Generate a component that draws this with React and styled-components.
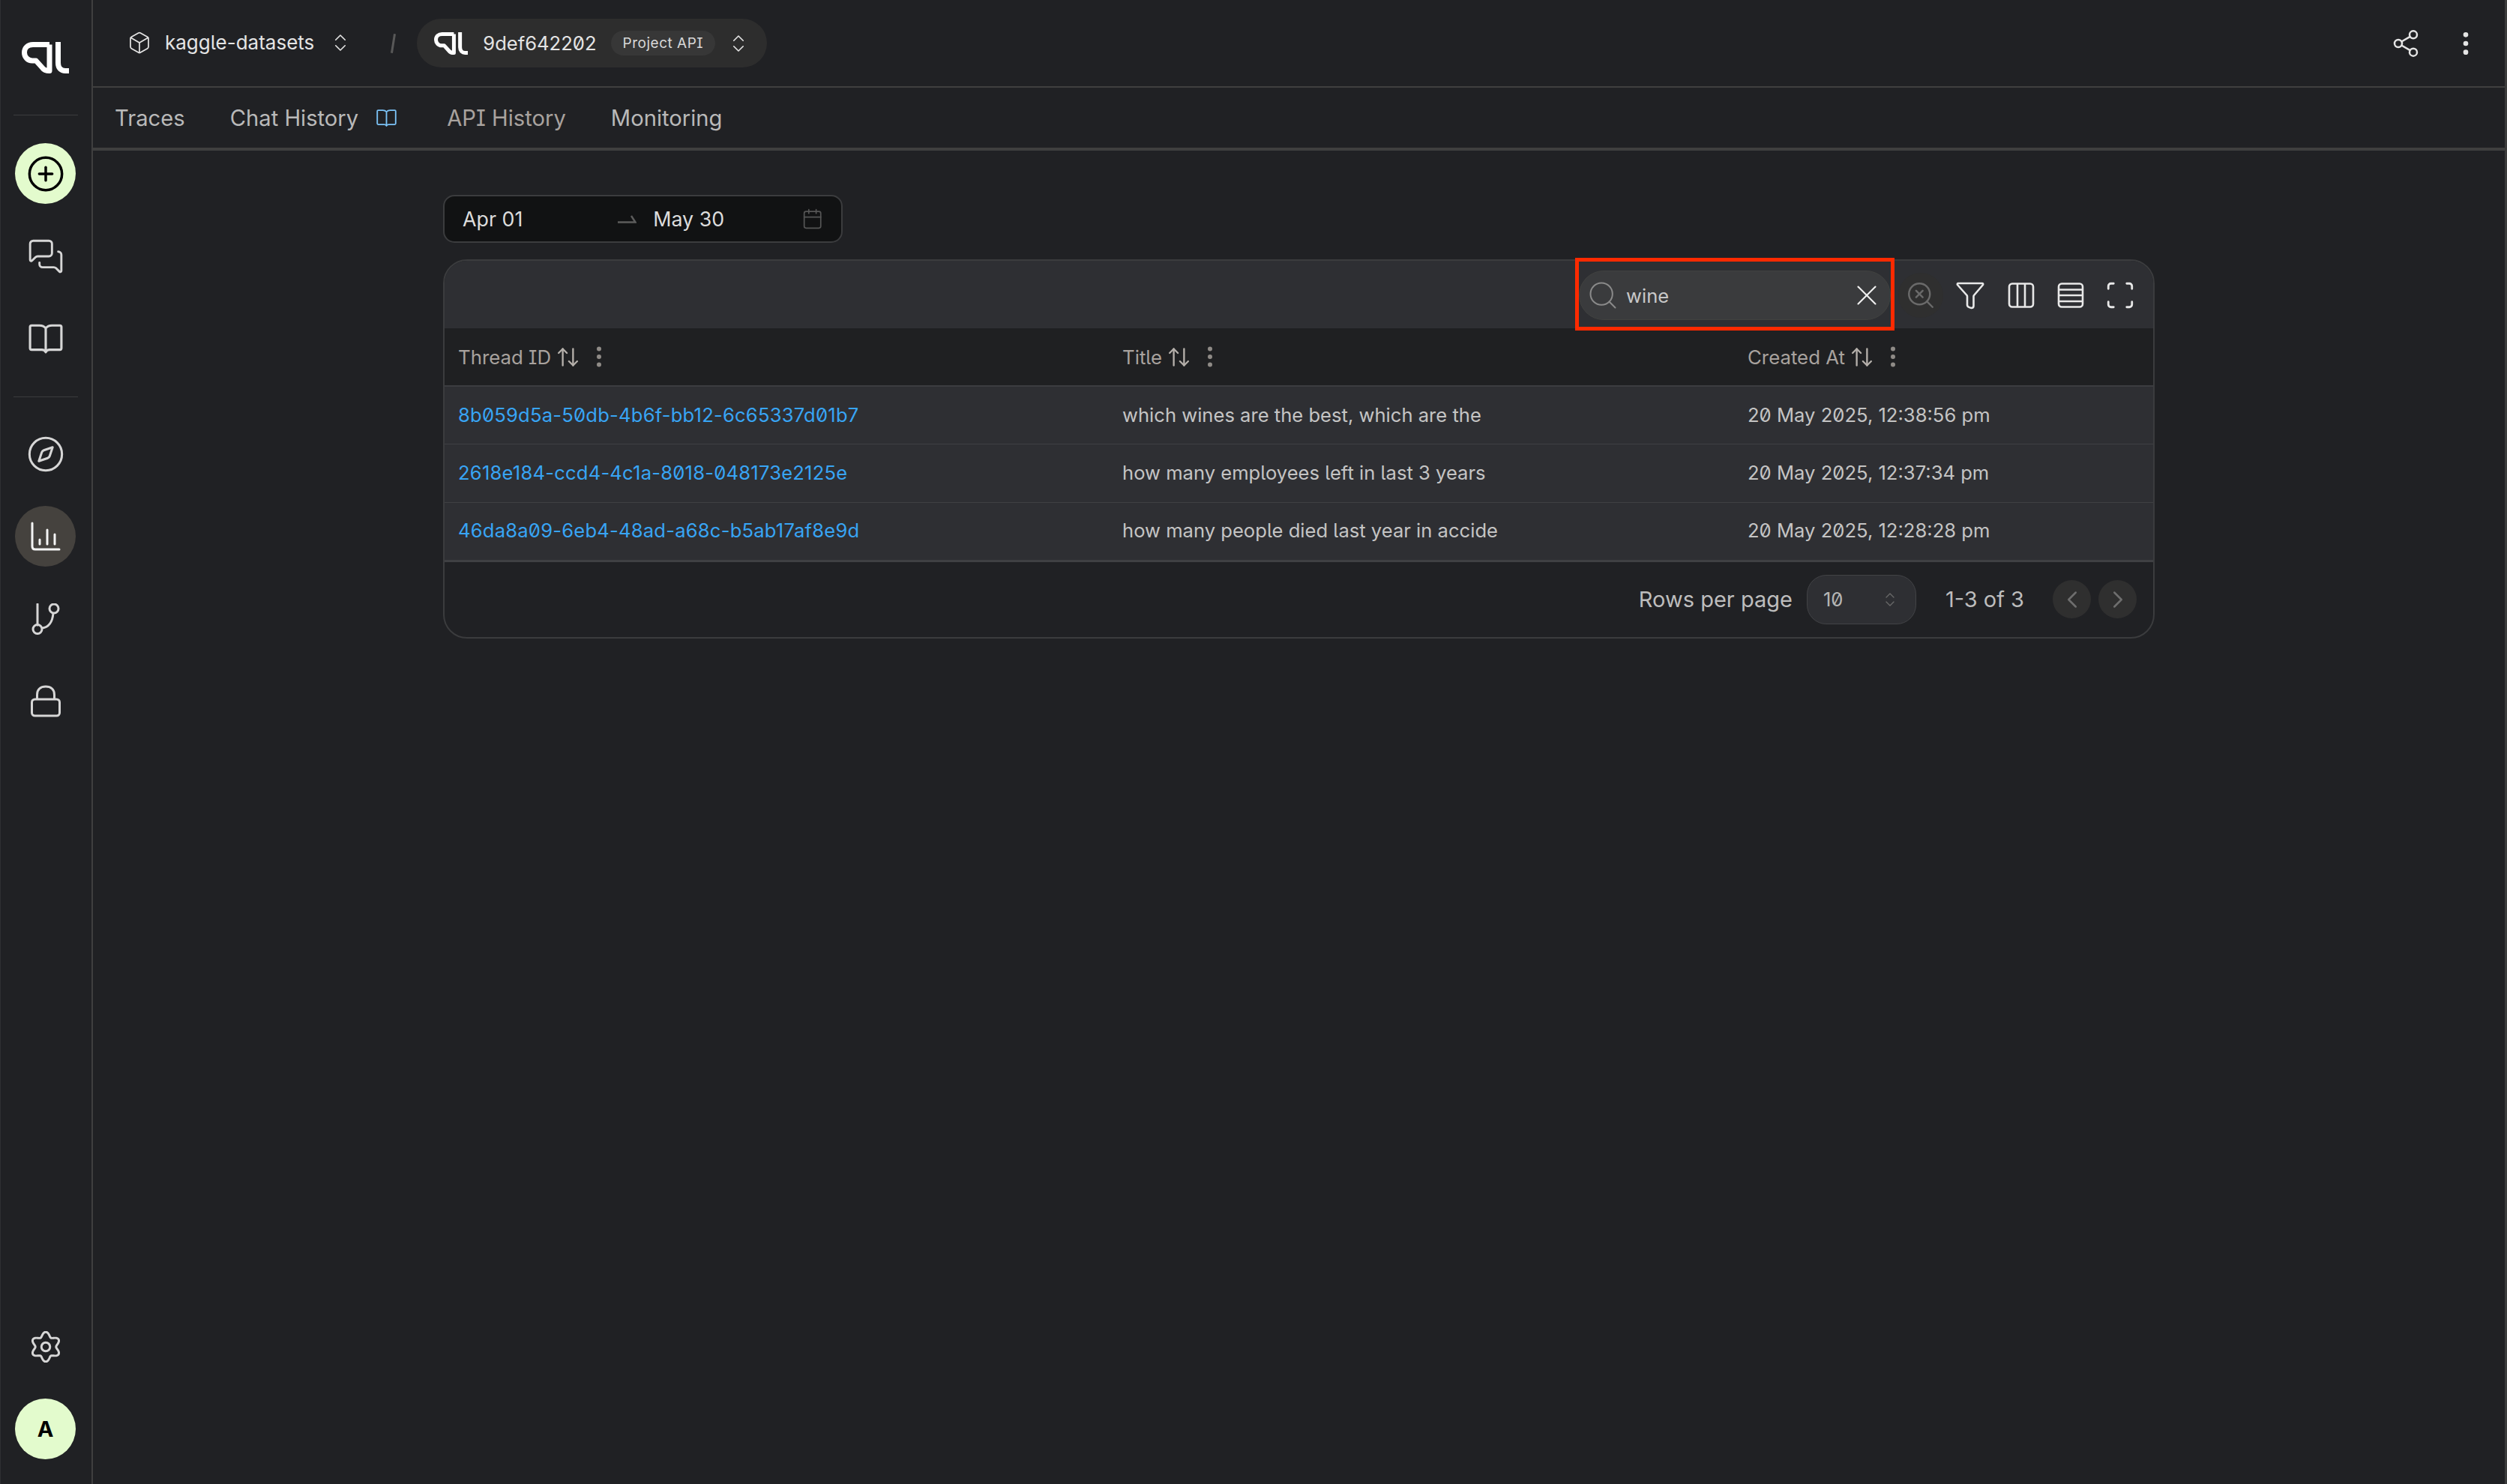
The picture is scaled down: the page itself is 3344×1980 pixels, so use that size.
import styled, { createGlobalStyle } from "styled-components";
import {
  Box,
  ChevronsUpDown,
  CirclePlus,
  MessagesSquare,
  Compass,
  Share2,
  EllipsisVertical,
  Search,
  SearchX,
  X,
  Scan,
  ArrowUpDown,
  ChevronLeft,
  ChevronRight,
  Calendar,
} from "lucide-react";

const threads = [
  {
    id: "8b059d5a-50db-4b6f-bb12-6c65337d01b7",
    title: "which wines are the best, which are the",
    created: "20 May 2025, 12:38:56 pm",
  },
  {
    id: "2618e184-ccd4-4c1a-8018-048173e2125e",
    title: "how many employees left in last 3 years",
    created: "20 May 2025, 12:37:34 pm",
  },
  {
    id: "46da8a09-6eb4-48ad-a68c-b5ab17af8e9d",
    title: "how many people died last year in accide",
    created: "20 May 2025, 12:28:28 pm",
  },
];

function gearPath() {
  const pts = [];
  for (let i = 0; i < 120; i++) {
    const a = (i / 120) * Math.PI * 2 - Math.PI / 2;
    const r = 9.6 + 1.7 * Math.cos(6 * (a + Math.PI / 2));
    pts.push(`${(12 + r * Math.cos(a)).toFixed(2)} ${(12 + r * Math.sin(a)).toFixed(2)}`);
  }
  return `M${pts.join("L")}Z`;
}

function Logo({ width, height }) {
  return (
    <svg width={width} height={height} viewBox="0 0 63 42" fill="none" stroke="#fff" strokeWidth="7">
      <path d="M37 3.500H15C8 3.500 3.500 8 3.500 14C3.500 20 8 25 14 25H19L28 35C30 38 33 38.500 37 38.500V3.500" strokeLinejoin="round" />
      <path d="M48.500 0V28C48.500 35 52.500 38.500 58 38.500H63" />
    </svg>
  );
}

function BookIcon({ size, color }) {
  return (
    <svg width={size} height={size} viewBox="0 0 44 44" fill="none" stroke={color} strokeWidth="3" strokeLinejoin="round">
      <path d="M22 8.5C20 6 17 5 14 5H4C2.800 5 2 5.800 2 7V34C2 35.200 2.800 36 4 36H17C19.500 36 21 37 22 39C23 37 24.500 36 27 36H40C41.200 36 42 35.200 42 34V7C42 5.800 41.200 5 40 5H30C27 5 24 6 22 8.500V39" />
    </svg>
  );
}

function ChartIcon() {
  return (
    <svg width="40" height="40" viewBox="0 0 40 40" fill="none" stroke="#f4f4f4" strokeWidth="3" strokeLinecap="round">
      <path d="M2 2V33C2 36 3.500 37 6 37H38" />
      <path d="M12 24V30M22 11V30M32 17V30" />
    </svg>
  );
}

function BranchIcon() {
  return (
    <svg width="40" height="42" viewBox="0 0 40 42" fill="none" stroke="#d6d6d6" strokeWidth="3">
      <path d="M9 1V29" strokeLinecap="round" />
      <circle cx="9" cy="34.500" r="6" />
      <circle cx="31" cy="7" r="6" />
      <path d="M15 33C24 32 29 25 30 13" />
    </svg>
  );
}

function LockIcon() {
  return (
    <svg width="40" height="44" viewBox="0 0 40 44" fill="none" stroke="#d6d6d6" strokeWidth="3">
      <rect x="1.500" y="19" width="37" height="22" rx="4" />
      <path d="M8.500 19V13C8.500 6 13 2 20 2C27 2 31.500 6 31.500 13V19" />
    </svg>
  );
}

function GearIcon() {
  return (
    <svg width="42" height="42" viewBox="0 0 24 24" fill="none" stroke="#d6d6d6" strokeWidth="1.700">
      <path d={gearPath()} strokeLinejoin="round" />
      <circle cx="12" cy="12" r="3.300" />
    </svg>
  );
}

function FunnelIcon() {
  return (
    <svg width="38" height="38" viewBox="0 0 38 38" fill="none" stroke="#e8e8e8" strokeWidth="2.600" strokeLinejoin="round">
      <path d="M3 3H35C36 3 36.500 4 36 5L24 19C23.600 19.500 23.500 20 23.500 20.500V33C23.500 35.500 22 36 20.500 36C18.500 35.500 15 34 15 32V20.500C15 20 14.800 19.500 14.500 19L2 5C1.500 4 2 3 3 3Z" />
    </svg>
  );
}

function ColumnsIcon() {
  return (
    <svg width="36" height="36" viewBox="0 0 36 36" fill="none" stroke="#e8e8e8" strokeWidth="2.600">
      <rect x="2" y="2.500" width="32" height="31" rx="4" />
      <path d="M13 2.500V33.500M23 2.500V33.500" />
    </svg>
  );
}

function RowsIcon() {
  return (
    <svg width="36" height="36" viewBox="0 0 36 36" fill="none" stroke="#e8e8e8" strokeWidth="2.600">
      <rect x="2" y="2.500" width="32" height="31" rx="4" />
      <path d="M2 10.500H34M2 18H34M2 26H34" />
    </svg>
  );
}

function HalfArrow() {
  return (
    <svg width="26" height="14" viewBox="0 0 26 14" fill="none" stroke="#5c5c5c" strokeWidth="2.400">
      <path d="M1 11.500H24.500L19 3" />
    </svg>
  );
}

const GlobalStyle = createGlobalStyle`
  * { box-sizing: border-box; }
  html, body { margin: 0; padding: 0; background: #202124; }
  body {
    font-family: Inter, "Liberation Sans", sans-serif;
    font-feature-settings: "ss02";
    -webkit-font-smoothing: antialiased;
  }
`;

const Page = styled.div`
  display: flex;
  width: 3344px;
  height: 1980px;
  background: #202124;
  border-right: 3px solid #3c3c3c;
  overflow: hidden;
`;

const Sidebar = styled.aside`
  flex: none;
  width: 124px;
  height: 100%;
  padding-right: 1px;
  display: flex;
  flex-direction: column;
  align-items: center;
  border-right: 2px solid #3f3f3f;
  box-shadow: inset 1px 0 0 #2f3032;
`;

const LogoArea = styled.div`
  width: 86px;
  height: 154px;
  padding-top: 56px;
  display: flex;
  justify-content: center;
  align-items: flex-start;
  border-bottom: 1px solid #3b3c3e;
`;

const NavGroup = styled.div`
  width: 86px;
  display: flex;
  flex-direction: column;
  align-items: center;
  gap: 29px;
  padding: ${(p) => p.$pad || "37px 0"};
  border-bottom: ${(p) => (p.$divider ? "1px solid #3b3c3e" : "none")};
`;

const BottomGroup = styled(NavGroup)`
  margin-top: auto;
  padding: 0 0 33px;
`;

const NavButton = styled.button`
  width: 81px;
  height: 81px;
  padding: 0;
  display: flex;
  align-items: center;
  justify-content: center;
  border: 0;
  border-radius: 50%;
  background: ${(p) => (p.$active ? "#45423e" : p.$primary ? "#e3fbcd" : "transparent")};
  color: ${(p) => (p.$primary ? "#000" : "#d6d6d6")};
`;

const Avatar = styled.div`
  width: 81px;
  height: 81px;
  border-radius: 50%;
  display: flex;
  align-items: center;
  justify-content: center;
  background: #e3fbcd;
  color: #000;
  font-size: 29px;
  font-weight: 700;
`;

const Main = styled.main`
  flex: 1;
  min-width: 0;
  display: flex;
  flex-direction: column;
`;

const TopBar = styled.header`
  height: 117px;
  flex: none;
  display: flex;
  align-items: center;
  padding: 0 32px 0 46px;
  border-bottom: 2px solid #3f3f3f;
`;

const Crumb = styled.div`
  display: flex;
  align-items: center;
  color: #e4e4e4;
  font-size: 26px;
  margin-top: -2px;
`;

const CrumbName = styled.span`
  margin: 0 20px 0 18px;
`;

const Slash = styled.span`
  width: 3px;
  height: 26px;
  margin: 0 30px 0 54px;
  background: #585858;
  transform: rotate(9deg);
`;

const ProjectPill = styled.div`
  height: 65px;
  padding: 0 23px 0 23px;
  display: flex;
  align-items: center;
  border-radius: 33px;
  background: #2d2d2d;
  color: #e4e4e4;
  font-size: 25.600px;
  font-feature-settings: "ss02", "zero";
`;

const ProjectId = styled.span`
  margin: 0 19px 0 20px;
`;

const Chip = styled.span`
  height: 33px;
  padding: 0 16px;
  margin-right: 16px;
  display: flex;
  align-items: center;
  border-radius: 17px;
  background: #373737;
  font-size: 19px;
  letter-spacing: 0.5px;
  color: #d8d8d8;
`;

const TopActions = styled.div`
  margin-left: auto;
  display: flex;
  align-items: center;
  gap: 40px;
  color: #e4e4e4;
`;

const TabBar = styled.nav`
  height: 84px;
  flex: none;
  display: flex;
  align-items: center;
  padding-left: 29px;
  gap: 60px;
  border-bottom: 4px solid #3f3f3f;
`;

const Tab = styled.div`
  display: flex;
  align-items: center;
  gap: 24px;
  margin-right: ${(p) => p.$extra || 0}px;
  font-size: 29.200px;
  color: ${(p) => (p.$muted ? "#a8a29e" : "#b9b9b9")};
`;

const Content = styled.div`
  flex: 1;
  padding: 59px 467px;
`;

const DatePicker = styled.div`
  width: 533px;
  height: 64px;
  margin-bottom: 22px;
  padding: 0 24px;
  display: flex;
  align-items: center;
  border: 2px solid #3b3c3e;
  border-radius: 15px;
  background: #111213;
  color: #dcdcdc;
  font-size: 26.800px;
  font-feature-settings: normal;
`;

const DateText = styled.span`
  width: ${(p) => p.$w}px;
`;

const ArrowSlot = styled.span`
  display: flex;
  width: 49px;
`;

const Card = styled.section`
  border: 2px solid #3b3c3e;
  border-radius: 32px;
`;

const Toolbar = styled.div`
  height: 90px;
  padding: 2px 14px 0 0;
  display: flex;
  align-items: center;
  justify-content: flex-end;
  gap: 6px;
  border-radius: 30px 30px 0 0;
  background: #2e2f33;
`;

const SearchBox = styled.div`
  position: relative;
  width: 416px;
  height: 66px;
  margin-right: 4px;
  padding: 0 8px 0 9px;
  display: flex;
  align-items: center;
  border: 1px solid #414240;
  border-radius: 33px;
  background: #3a3b3d;
  color: #c8c8c8;
  font-size: 25.600px;
`;

const SearchText = styled.span`
  flex: 1;
  margin-left: 9px;
`;

const Highlight = styled.div`
  position: absolute;
  top: -18px;
  right: -6px;
  bottom: -15px;
  left: -6px;
  border: 5px solid #ff2a00;
  pointer-events: none;
`;

const ToolButton = styled.button`
  width: 60px;
  height: 60px;
  margin-right: ${(p) => p.$nudge || 0}px;
  padding: 0;
  display: flex;
  align-items: center;
  justify-content: center;
  border: 0;
  border-radius: 50%;
  background: ${(p) => (p.disabled ? "#2f2f2f" : "transparent")};
  color: ${(p) => (p.disabled ? "#6a6a6a" : "#e8e8e8")};
`;

const Row = styled.div`
  display: grid;
  grid-template-columns: 886px 834px 1fr;
  align-items: center;
  height: ${(p) => (p.$head ? "76px" : "77.330px")};
  background: ${(p) => (p.$head ? "#1f2022" : "#2e2f33")};
  border-bottom: ${(p) => (p.$head ? 0 : 1)}px solid #3f4043;
`;

const HeadCell = styled.div`
  display: flex;
  align-items: center;
  padding-left: 18px;
  color: #a8a29e;
  font-size: 25.800px;
`;

const SortIcon = styled(ArrowUpDown)`
  margin: 0 0 0 6px;
  color: #b5b0ab;
`;

const MenuIcon = styled(EllipsisVertical)`
  margin-left: 7px;
  color: #8f8b87;
`;

const Cell = styled.div`
  padding: 0 0 2px 18px;
  font-size: 25.600px;
  color: ${(p) => (p.$link ? "#38a5f5" : "#c4c4c4")};
  letter-spacing: ${(p) => (p.$link ? "0.2px" : "normal")};
  font-feature-settings: "ss02", "zero";
  white-space: nowrap;
`;

const Rows = styled.div`
  border-top: 2px solid #3c3d40;
  border-bottom: 2px solid #3f4043;
`;

const Footer = styled.div`
  height: 100px;
  padding-right: 22px;
  display: flex;
  align-items: center;
  justify-content: flex-end;
  color: #bdbdbd;
  font-size: 29px;
`;

const SelectBox = styled.div`
  width: 146px;
  height: 66px;
  margin: 0 39px 0 19px;
  padding: 0 22px 0 21px;
  display: flex;
  align-items: center;
  justify-content: space-between;
  border: 1px solid #424346;
  border-radius: 26px;
  background: #2e2f33;
  color: #b5b5b5;
  font-size: 25.600px;
  font-feature-settings: "ss02", "zero";
`;

const PageButton = styled.button`
  width: 51px;
  height: 51px;
  margin-left: ${(p) => p.$gap}px;
  padding: 0;
  display: flex;
  align-items: center;
  justify-content: center;
  border: 0;
  border-radius: 50%;
  background: #2f2f2f;
  color: #6e6e6e;
`;

export default function App() {
  return (
    <Page>
      <GlobalStyle />
      <Sidebar>
        <LogoArea>
          <Logo width={63} height={42} />
        </LogoArea>
        <NavGroup $divider>
          <NavButton $primary>
            <CirclePlus size={52} strokeWidth={1.6} />
          </NavButton>
          <NavButton>
            <MessagesSquare size={50} strokeWidth={1.4} />
          </NavButton>
          <NavButton>
            <BookIcon size={46} color="#d6d6d6" />
          </NavButton>
        </NavGroup>
        <NavGroup $pad="35px 0">
          <NavButton>
            <Compass size={52} strokeWidth={1.4} />
          </NavButton>
          <NavButton $active>
            <ChartIcon />
          </NavButton>
          <NavButton>
            <BranchIcon />
          </NavButton>
          <NavButton>
            <LockIcon />
          </NavButton>
        </NavGroup>
        <BottomGroup>
          <NavButton>
            <GearIcon />
          </NavButton>
          <Avatar>A</Avatar>
        </BottomGroup>
      </Sidebar>
      <Main>
        <TopBar>
          <Crumb>
            <Box size={32} strokeWidth={1.3} />
            <CrumbName>kaggle-datasets</CrumbName>
            <ChevronsUpDown size={30} strokeWidth={1.3} />
          </Crumb>
          <Slash />
          <ProjectPill>
            <Logo width={45} height={30} />
            <ProjectId>9def642202</ProjectId>
            <Chip>Project API</Chip>
            <ChevronsUpDown size={30} strokeWidth={1.3} />
          </ProjectPill>
          <TopActions>
            <Share2 size={40} strokeWidth={1.5} />
            <EllipsisVertical size={40} strokeWidth={2} />
          </TopActions>
        </TopBar>
        <TabBar>
          <Tab>Traces</Tab>
          <Tab $extra={7}>
            Chat History
            <BookIcon size={27} color="#7cc4f8" />
          </Tab>
          <Tab $muted>API History</Tab>
          <Tab>Monitoring</Tab>
        </TabBar>
        <Content>
          <DatePicker>
            <DateText $w={210}>Apr 01</DateText>
            <ArrowSlot>
              <HalfArrow />
            </ArrowSlot>
            <DateText $w={201}>May 30</DateText>
            <Calendar size={30} strokeWidth={1.4} color="#555" />
          </DatePicker>
          <Card>
            <Toolbar>
              <SearchBox>
                <Search size={44} strokeWidth={1.1} color="#8a8a8a" />
                <SearchText>wine</SearchText>
                <X size={46} strokeWidth={1.1} color="#f0f0f0" />
                <Highlight />
              </SearchBox>
              <ToolButton disabled>
                <SearchX size={42} strokeWidth={1.4} />
              </ToolButton>
              <ToolButton $nudge={2}>
                <FunnelIcon />
              </ToolButton>
              <ToolButton>
                <ColumnsIcon />
              </ToolButton>
              <ToolButton>
                <RowsIcon />
              </ToolButton>
              <ToolButton>
                <Scan size={42} strokeWidth={1.6} />
              </ToolButton>
            </Toolbar>
            <Row $head>
              {["Thread ID", "Title", "Created At"].map((name) => (
                <HeadCell key={name}>
                  {name}
                  <SortIcon size={33} strokeWidth={1.7} />
                  <MenuIcon size={36} strokeWidth={2} />
                </HeadCell>
              ))}
            </Row>
            <Rows>
              {threads.map((t) => (
                <Row key={t.id}>
                  <Cell $link>{t.id}</Cell>
                  <Cell>{t.title}</Cell>
                  <Cell>{t.created}</Cell>
                </Row>
              ))}
            </Rows>
            <Footer>
              <span>Rows per page</span>
              <SelectBox>
                10
                <ChevronsUpDown size={24} strokeWidth={1.3} color="#6a6a6a" />
              </SelectBox>
              <span>1-3 of 3</span>
              <PageButton $gap={38}>
                <ChevronLeft size={38} strokeWidth={1.6} />
              </PageButton>
              <PageButton $gap={10}>
                <ChevronRight size={38} strokeWidth={1.6} />
              </PageButton>
            </Footer>
          </Card>
        </Content>
      </Main>
    </Page>
  );
}
